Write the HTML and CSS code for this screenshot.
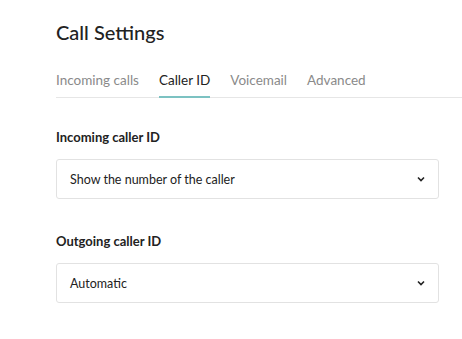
FILE: index.html
```html
<!DOCTYPE html>
<html>
<head>
<meta charset="utf-8">
<link rel="stylesheet" href="styles.css">
</head>
<body>
<div class="page">
  <h1 class="title">Call Settings</h1>
  <nav class="tabs">
    <span class="tab">Incoming calls</span>
    <span class="tab active">Caller ID</span>
    <span class="tab">Voicemail</span>
    <span class="tab">Advanced</span>
  </nav>
  <section class="field">
    <div class="label">Incoming caller ID</div>
    <div class="select">
      <span>Show the number of the caller</span>
      <svg class="chev" width="8" height="6" viewBox="0 0 8 6"><path d="M1 1.5 L4 4.5 L7 1.5" fill="none" stroke="#222" stroke-width="1.6"/></svg>
    </div>
  </section>
  <section class="field">
    <div class="label">Outgoing caller ID</div>
    <div class="select">
      <span>Automatic</span>
      <svg class="chev" width="8" height="6" viewBox="0 0 8 6"><path d="M1 1.5 L4 4.5 L7 1.5" fill="none" stroke="#222" stroke-width="1.6"/></svg>
    </div>
  </section>
</div>
</body>
</html>
```

FILE: styles.css
```css
html, body {
  margin: 0;
  padding: 0;
  background: #fff;
}
body {
  font-family: Lato, "Open Sans", sans-serif;
  color: #222;
}
.page {
  padding: 19px 0 0 56px;
}
.title {
  margin: 0;
  font-size: 20px;
  font-weight: 500;
  line-height: 26px;
  color: #222;
}
.tabs {
  display: flex;
  gap: 20px;
  margin-top: 27px;
  border-bottom: 1px solid #e6e6e6;
}
.tab {
  font-size: 13.5px;
  color: #8a8a8a;
  line-height: 16px;
  padding-bottom: 8px;
  border-bottom: 2px solid transparent;
  margin-bottom: -1px;
}
.tab.active {
  color: #222;
  border-bottom-color: #7cc2c2;
}
.field {
  margin-top: 31px;
  margin-right: 23px;
}
.field + .field {
  margin-top: 34px;
}
.label {
  font-size: 13px;
  font-weight: 700;
  line-height: 16px;
  color: #222;
}
.select {
  margin-top: 14px;
  height: 38px;
  border: 1px solid #e2e2e2;
  border-radius: 3px;
  display: flex;
  align-items: center;
  justify-content: space-between;
  padding: 0 13px 0 13px;
  font-size: 12.5px;
  color: #222;
}
.chev {
  display: block;
}
```
